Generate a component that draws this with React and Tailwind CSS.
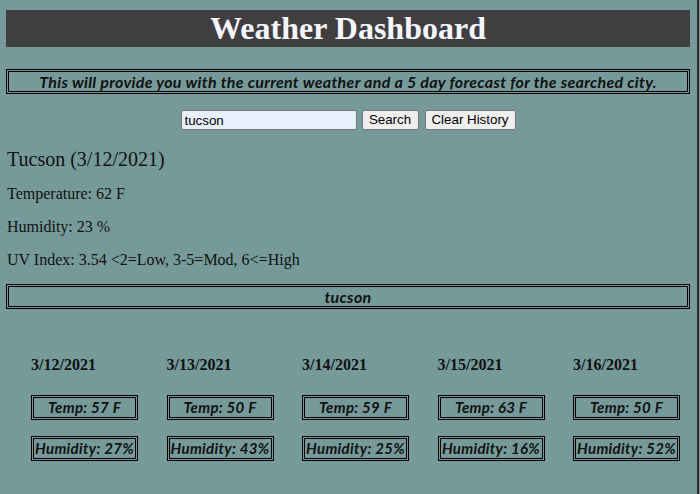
export default function App() {
  const days = [
    { d: "3/12/2021", t: "57", h: "27" },
    { d: "3/13/2021", t: "50", h: "43" },
    { d: "3/14/2021", t: "59", h: "25" },
    { d: "3/15/2021", t: "63", h: "16" },
    { d: "3/16/2021", t: "50", h: "52" },
  ];
  const fancy = { fontFamily: "Lato, 'Open Sans', sans-serif" };
  const serif = { fontFamily: "'Liberation Serif', 'Times New Roman', serif" };
  const arial = { fontFamily: "'Liberation Sans', Arial, sans-serif" };
  return (
    <div className="w-full h-[494px] bg-[#769a99] overflow-hidden">
      <div className="w-[699px] h-[494px] border-r-2 border-[#2e2e2e] pl-[6px] pr-[7px] pt-[10px] text-black" style={serif}>
        <div className="h-[37px] bg-[#403e3f] flex items-center justify-center">
          <h1 className="text-[32px] leading-[37px] font-bold text-[#f4f7ff]" style={serif}>Weather Dashboard</h1>
        </div>
        <div className="mt-[22px] h-[25px] border-[3px] border-double border-black flex items-center justify-center">
          <p className="text-[16px] font-bold italic leading-[19px] tracking-[0.3px] text-[#111]" style={fancy}>
            This will provide you with the current weather and a 5 day forecast for the searched city.
          </p>
        </div>
        <div className="mt-[16px] h-[20px] flex items-center justify-center" style={arial}>
          <input
            readOnly
            value="tucson"
            className="w-[176px] h-[20px] bg-[#e8f0fe] border border-[#767676] rounded-[2px] px-[3px] text-[13.33px] text-black outline-none"
            style={arial}
          />
          <button className="ml-[5px] w-[57px] h-[20px] bg-[#efefef] border border-[#767676] rounded-[2px] text-[13.33px] text-black leading-none" style={arial}>Search</button>
          <button className="ml-[6px] w-[91px] h-[20px] bg-[#efefef] border border-[#767676] rounded-[2px] text-[13.33px] text-black leading-none" style={arial}>Clear History</button>
        </div>
        <div className="pl-[1px]">
          <h2 className="mt-[17px] h-[24px] text-[20px] leading-[24px] text-[#111]">Tucson (3/12/2021)</h2>
          <div className="mt-[14px] flex flex-col gap-[15px] text-[16px] leading-[18px] text-[#111]">
            <p>Temperature: 62 F</p>
            <p>Humidity: 23 %</p>
            <p>UV Index: 3.54 &lt;2=Low, 3-5=Mod, 6&lt;=High</p>
          </div>
        </div>
        <div className="mt-[15px] h-[25px] border-[3px] border-double border-black flex items-center justify-center">
          <p className="text-[16px] font-bold italic leading-[19px] tracking-[0.3px] text-[#111]" style={fancy}>tucson</p>
        </div>
        <div className="mt-[47px] pl-[25px] flex">
          {days.map((x) => (
            <div key={x.d} className="w-[135.5px] shrink-0">
              <div className="h-[18px] text-[16px] leading-[18px] font-bold text-[#111]">{x.d}</div>
              <div className="mt-[21px] w-[107px] h-[25px] border-[3px] border-double border-black flex items-center justify-center text-[15px] font-bold italic leading-[19px] tracking-[0.3px] text-[#111]" style={fancy}>
                Temp: {x.t} F
              </div>
              <div className="mt-[16px] w-[107px] h-[25px] border-[3px] border-double border-black flex items-center justify-center text-[15px] font-bold italic leading-[19px] tracking-[0.3px] text-[#111] whitespace-nowrap" style={fancy}>
                Humidity: {x.h}%
              </div>
            </div>
          ))}
        </div>
      </div>
    </div>
  );
}
